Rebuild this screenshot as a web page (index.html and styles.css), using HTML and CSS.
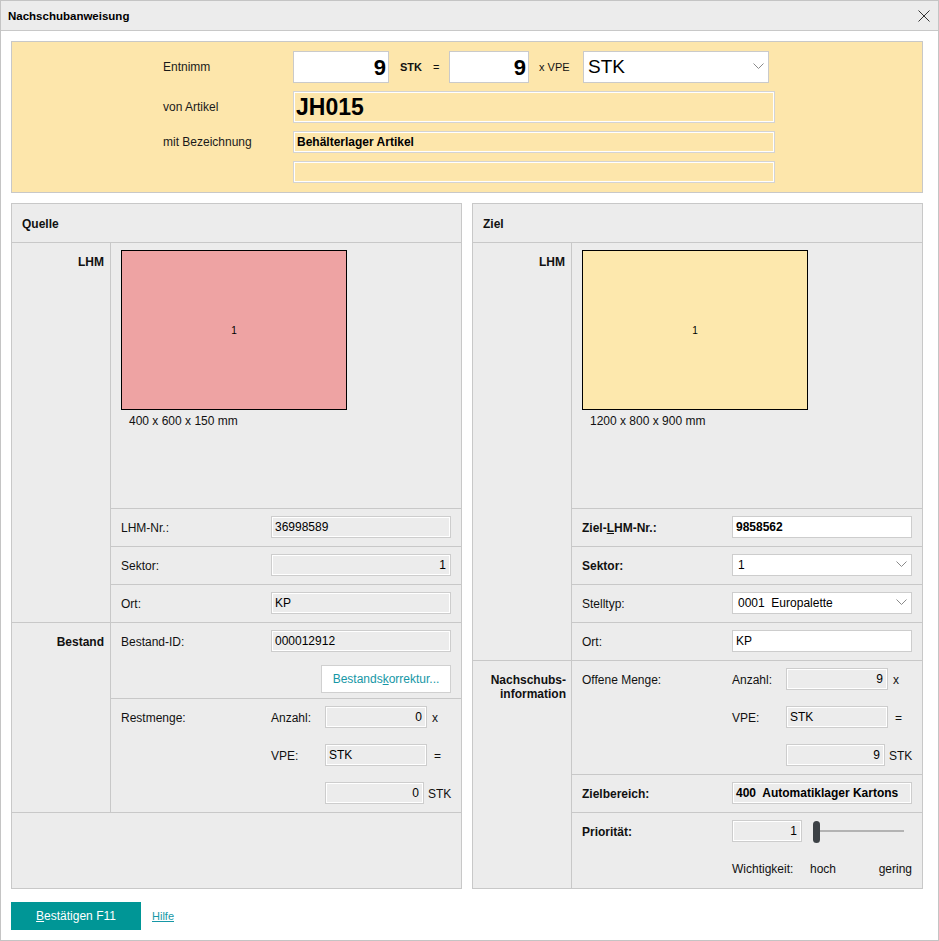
FILE: index.html
```html
<!DOCTYPE html>
<html lang="de">
<head>
<meta charset="utf-8">
<title>Nachschubanweisung</title>
<link rel="stylesheet" href="styles.css">
</head>
<body>
<div class="window">
  <div class="titlebar">
    <span class="title">Nachschubanweisung</span>
    <svg class="close" width="12" height="12" viewBox="0 0 12 12"><path d="M0.5 0.5 L11.5 11.5 M11.5 0.5 L0.5 11.5" stroke="#333" stroke-width="1" fill="none"/></svg>
  </div>
  <div class="content">
    <div class="top-panel">
      <div class="tlabel">Entnimm</div>
      <div class="trow">
        <div class="tinput qty1">9</div>
        <span class="u-stk">STK</span>
        <span class="u-eq">=</span>
        <div class="tinput qty2">9</div>
        <span class="u-vpe">x VPE</span>
        <div class="tselect"><span>STK</span><svg class="chev" width="11" height="6" viewBox="0 0 11 6"><path d="M0.5 0.5 L5.5 5.5 L10.5 0.5" stroke="#8a8a8a" fill="none"/></svg></div>
      </div>
      <div class="tlabel">von Artikel</div>
      <div class="yfield tall big">JH015</div>
      <div class="tlabel">mit Bezeichnung</div>
      <div class="yfield bold">Behälterlager Artikel</div>
      <div class="tlabel"></div>
      <div class="yfield"></div>
    </div>

    <div class="panels">
      <section class="panel">
        <div class="phead">Quelle</div>
        <div class="sec">
          <div class="sec-label">LHM</div>
          <div class="sec-body">
            <div class="sub img-row">
              <div class="lhm-box pink">1</div>
              <div class="dim">400 x 600 x 150 mm</div>
            </div>
            <div class="sub"><span class="lbl">LHM-Nr.:</span><div class="field ro">36998589</div></div>
            <div class="sub"><span class="lbl">Sektor:</span><div class="field ro right">1</div></div>
            <div class="sub"><span class="lbl">Ort:</span><div class="field ro">KP</div></div>
          </div>
        </div>
        <div class="sec">
          <div class="sec-label">Bestand</div>
          <div class="sec-body">
            <div class="sub bestand">
              <div class="line"><span class="lbl">Bestand-ID:</span><div class="field ro">000012912</div></div>
              <div class="btn-row"><button class="btn-sec">Bestands<u>k</u>orrektur...</button></div>
            </div>
            <div class="sub qty-sub">
              <span class="lbl">Restmenge:</span>
              <div class="qty-list">
                <div class="qrow"><span class="ql">Anzahl:</span><div class="field ro right w102">0</div><span class="qs">x</span></div>
                <div class="qrow"><span class="ql">VPE:</span><div class="field ro w102">STK</div><span class="qs eq">=</span></div>
                <div class="qrow"><span class="ql"></span><div class="field ro right w99">0</div><span class="qs stk">STK</span></div>
              </div>
            </div>
          </div>
        </div>
        <div class="sec empty"></div>
      </section>

      <section class="panel">
        <div class="phead">Ziel</div>
        <div class="sec">
          <div class="sec-label">LHM</div>
          <div class="sec-body">
            <div class="sub img-row">
              <div class="lhm-box yellow">1</div>
              <div class="dim">1200 x 800 x 900 mm</div>
            </div>
            <div class="sub"><span class="lbl b">Ziel-<u>L</u>HM-Nr.:</span><div class="field wh b">9858562</div></div>
            <div class="sub"><span class="lbl b">Sektor:</span><div class="field wh select"><span>1</span><svg class="chev" width="11" height="6" viewBox="0 0 11 6"><path d="M0.5 0.5 L5.5 5.5 L10.5 0.5" stroke="#8a8a8a" fill="none"/></svg></div></div>
            <div class="sub"><span class="lbl">Stelltyp:</span><div class="field wh select"><span class="pre">0001  Europalette</span><svg class="chev" width="11" height="6" viewBox="0 0 11 6"><path d="M0.5 0.5 L5.5 5.5 L10.5 0.5" stroke="#8a8a8a" fill="none"/></svg></div></div>
            <div class="sub"><span class="lbl">Ort:</span><div class="field wh">KP</div></div>
          </div>
        </div>
        <div class="sec last">
          <div class="sec-label two">Nachschubs-<br>information</div>
          <div class="sec-body">
            <div class="sub qty-sub">
              <span class="lbl">Offene Menge:</span>
              <div class="qty-list">
                <div class="qrow"><span class="ql">Anzahl:</span><div class="field ro right w102">9</div><span class="qs">x</span></div>
                <div class="qrow"><span class="ql">VPE:</span><div class="field ro w102">STK</div><span class="qs eq">=</span></div>
                <div class="qrow"><span class="ql"></span><div class="field ro right w99">9</div><span class="qs stk">STK</span></div>
              </div>
            </div>
            <div class="sub"><span class="lbl b">Zielbereich:</span><div class="field ro b pre">400  Automatiklager Kartons</div></div>
            <div class="sub prio">
              <div class="line">
                <span class="lbl b">Priorität:</span>
                <div class="field ro right w70">1</div>
                <div class="slider"><div class="track"></div><div class="thumb"></div></div>
              </div>
              <div class="weight"><span class="w-l">Wichtigkeit:</span><span>hoch</span><span class="w-r">gering</span></div>
            </div>
          </div>
        </div>
      </section>
    </div>

    <div class="footer">
      <button class="btn-primary"><u>B</u>estätigen F11</button>
      <a class="help" href="#">Hilfe</a>
    </div>
  </div>
</div>
</body>
</html>
```

FILE: styles.css
```css
* { box-sizing: border-box; }

html, body {
  margin: 0;
  padding: 0;
  background: #fff;
}

body {
  font-family: "Liberation Sans", Arial, sans-serif;
  font-size: 12px;
  color: #111;
}

.window {
  width: 939px;
  height: 941px;
  border: 1px solid #c4c4c4;
  background: #fff;
}

.titlebar {
  height: 30px;
  background: #ececec;
  border-bottom: 1px solid #c8c8c8;
  display: flex;
  align-items: center;
  justify-content: space-between;
  padding: 0 8px 0 7px;
}

.title {
  font-weight: bold;
  font-size: 11.5px;
  color: #000;
}

.close { display: block; margin-top: 1px; }

.content {
  padding: 10px 15px 0 10px;
}

/* top panel */
.top-panel {
  background: #fde6ab;
  border: 1px solid #c8c8c8;
  display: grid;
  grid-template-columns: 130px 482px;
  row-gap: 8px;
  padding: 9px 0 9px 151px;
  align-items: center;
}

.tlabel {
  font-size: 12px;
  color: #1a1a1a;
}

.trow {
  display: flex;
  align-items: center;
  height: 32px;
}

.tinput {
  height: 32px;
  background: #fff;
  border: 1px solid #cacaca;
  font-weight: bold;
  font-size: 22px;
  line-height: 31px;
  text-align: right;
  padding-right: 2px;
  color: #000;
}

.qty1 { width: 96px; }
.qty2 { width: 80px; }

.u-stk {
  margin-left: 11px;
  width: 33px;
  font-weight: bold;
  font-size: 11px;
}

.u-eq {
  width: 16px;
  font-size: 11px;
}

.u-vpe {
  margin-left: 10px;
  width: 44px;
  font-size: 11px;
}

.tselect {
  width: 186px;
  height: 32px;
  background: #fff;
  border: 1px solid #cacaca;
  display: flex;
  align-items: center;
  justify-content: space-between;
  padding: 0 4px 0 4px;
  font-size: 19px;
  color: #000;
}

.tselect .chev { margin-top: -3px; }

.yfield {
  height: 22px;
  border: 1px solid #d3d3d3;
  box-shadow: inset 0 0 0 1px #fff;
  padding: 0 3px;
  line-height: 20px;
  font-size: 12px;
  color: #000;
}

.yfield.tall { height: 32px; line-height: 30px; }
.yfield.big { font-size: 23px; font-weight: bold; padding-left: 2px; }
.yfield.bold { font-weight: bold; }

/* panels */
.panels {
  margin-top: 10px;
  display: grid;
  grid-template-columns: 451px 451px;
  column-gap: 10px;
}

.panel {
  background: #ececec;
  border: 1px solid #c8c8c8;
  height: 686px;
  display: flex;
  flex-direction: column;
  min-width: 0;
}

.phead {
  height: 39px;
  border-bottom: 1px solid #c8c8c8;
  padding: 13px 0 0 10px;
  font-weight: bold;
  font-size: 12px;
  line-height: 14px;
}

.sec {
  display: flex;
  border-bottom: 1px solid #c8c8c8;
}

.sec.last { border-bottom: none; flex: 1; }
.sec.empty { border-bottom: none; flex: 1; }

.sec-label {
  width: 99px;
  flex: none;
  border-right: 1px solid #c8c8c8;
  text-align: right;
  padding: 12px 6px 0 0;
  font-weight: bold;
  font-size: 12px;
  line-height: 14px;
}

.sec-label.two { padding-right: 5px; }

.sec-body {
  flex: 1;
  min-width: 0;
  display: flex;
  flex-direction: column;
}

.sub {
  border-bottom: 1px solid #c8c8c8;
  padding: 7px 10px 8px 10px;
  display: flex;
  align-items: flex-start;
}

.sub:last-child { border-bottom: none; }

.lbl {
  width: 150px;
  height: 22px;
  flex: none;
  line-height: 24px;
  font-size: 12px;
}

.lbl.b, .b { font-weight: bold; }

.field {
  height: 22px;
  width: 180px;
  flex: none;
  border: 1px solid #cdcdcd;
  padding: 0 3px;
  font-size: 12px;
  line-height: 20px;
  color: #000;
  white-space: nowrap;
  overflow: hidden;
}

.field.ro {
  background: #ececec;
  box-shadow: inset 0 0 0 1px #fff;
}

.field.wh { background: #fff; }

.field.right { text-align: right; padding-right: 4px; }

.field.select {
  display: flex;
  align-items: center;
  justify-content: space-between;
  line-height: 20px;
  padding: 0 4px 0 5px;
}

.field.select .chev { margin-top: -2px; }

.pre { white-space: pre; }

.w102 { width: 102px; }
.w99 { width: 99px; }
.w70 { width: 70px; }

/* image row */
.img-row {
  height: 266px;
  flex-direction: column;
  padding: 7px 10px 0 10px;
}

.lhm-box {
  width: 226px;
  height: 160px;
  border: 1px solid #000;
  display: flex;
  align-items: center;
  justify-content: center;
  font-size: 10px;
  color: #000;
}

.lhm-box.pink { background: #eea3a3; }
.lhm-box.yellow { background: #fde8ad; }

.dim {
  margin-top: 4px;
  padding-left: 8px;
  line-height: 14px;
  font-size: 12px;
}

/* bestand */
.sub.bestand {
  flex-direction: column;
  align-items: stretch;
  padding-bottom: 5px;
}

.line {
  display: flex;
  align-items: flex-start;
}

.btn-row {
  display: flex;
  justify-content: flex-end;
  margin-top: 13px;
}

.btn-sec {
  width: 130px;
  height: 28px;
  background: #fff;
  border: 1px solid #d0d0d0;
  color: #1697a6;
  font-family: "Liberation Sans", Arial, sans-serif;
  font-size: 12px;
  padding: 0;
}

/* qty */
.qty-list {
  display: flex;
  flex-direction: column;
  gap: 16px;
}

.qrow {
  display: flex;
  align-items: center;
  height: 22px;
}

.ql {
  width: 54px;
  flex: none;
  padding-top: 1px;
}

.qs { padding-left: 5px; padding-top: 1px; }
.qs.eq { padding-left: 7px; }
.qs.stk { padding-left: 4px; }

/* priority */
.sub.prio {
  flex-direction: column;
  align-items: stretch;
  padding-bottom: 0;
}

.slider {
  position: relative;
  width: 91px;
  height: 22px;
  margin-left: 11px;
  flex: none;
}

.track {
  position: absolute;
  left: 6px;
  right: 0;
  top: 10px;
  height: 2px;
  background: #b3b3b3;
}

.thumb {
  position: absolute;
  left: 0;
  top: 1px;
  width: 7px;
  height: 22px;
  border-radius: 4px;
  background: #3d4246;
}

.weight {
  display: flex;
  margin-top: 20px;
  margin-left: 150px;
  line-height: 14px;
}

.w-l { width: 78px; }
.w-r { margin-left: auto; }

/* footer */
.footer {
  margin-top: 13px;
  display: flex;
  align-items: center;
}

.btn-primary {
  width: 130px;
  height: 28px;
  border: none;
  background: #009696;
  color: #fff;
  font-family: "Liberation Sans", Arial, sans-serif;
  font-size: 12px;
  padding: 0;
}

.help {
  margin-left: 11px;
  color: #1697a6;
  font-size: 11px;
}
```
